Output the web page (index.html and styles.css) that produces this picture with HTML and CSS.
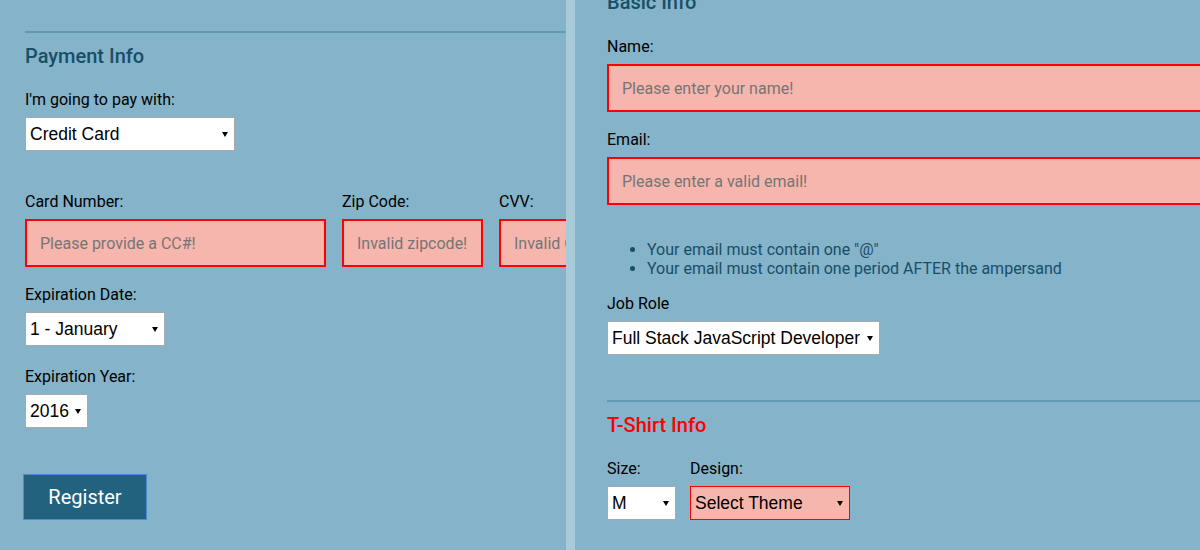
FILE: index.html
```html
<!DOCTYPE html>
<html lang="en">
<head>
<meta charset="utf-8">
<title>Registration</title>
<link rel="stylesheet" href="styles.css">
</head>
<body>
<div class="page">
  <section class="pane pane-left">
    <div class="rule"></div>
    <h2 class="legend">Payment Info</h2>
    <div class="field mt-22">
      <label class="label">I'm going to pay with:</label>
      <span class="select-wrap w-pay"><select class="select"><option>Credit Card</option></select></span>
    </div>
    <div class="row row-card mt-41">
      <div class="field w-cc">
        <label class="label">Card Number:</label>
        <input class="input" type="text" placeholder="Please provide a CC#!">
      </div>
      <div class="field w-zip">
        <label class="label">Zip Code:</label>
        <input class="input" type="text" placeholder="Invalid zipcode!">
      </div>
      <div class="field w-zip">
        <label class="label">CVV:</label>
        <input class="input" type="text" placeholder="Invalid CVV!">
      </div>
    </div>
    <div class="field mt-18">
      <label class="label">Expiration Date:</label>
      <span class="select-wrap w-month"><select class="select"><option>1 - January</option></select></span>
    </div>
    <div class="field mt-21">
      <label class="label">Expiration Year:</label>
      <span class="select-wrap w-year"><select class="select"><option>2016</option></select></span>
    </div>
    <button class="register" type="button">Register</button>
  </section>
  <div class="divider"></div>
  <section class="pane pane-right">
    <h2 class="legend legend-top">Basic Info</h2>
    <div class="field mt-23">
      <label class="label">Name:</label>
      <input class="input input-wide" type="text" placeholder="Please enter your name!">
    </div>
    <div class="field mt-18">
      <label class="label">Email:</label>
      <input class="input input-wide" type="text" placeholder="Please enter a valid email!">
    </div>
    <ul class="hints">
      <li>Your email must contain one "@"</li>
      <li>Your email must contain one period AFTER the ampersand</li>
    </ul>
    <div class="field mt-16">
      <label class="label">Job Role</label>
      <span class="select-wrap w-job"><select class="select"><option>Full Stack JavaScript Developer</option></select></span>
    </div>
    <div class="rule mt-45"></div>
    <h2 class="legend legend-error">T-Shirt Info</h2>
    <div class="row row-shirt mt-22">
      <div class="field">
        <label class="label">Size:</label>
        <span class="select-wrap w-size"><select class="select"><option>M</option></select></span>
      </div>
      <div class="field">
        <label class="label">Design:</label>
        <span class="select-wrap w-design select-error"><select class="select"><option>Select Theme</option></select></span>
      </div>
    </div>
  </section>
</div>
</body>
</html>
```
FILE: styles.css
```css
* { box-sizing: border-box; }

html, body {
  margin: 0;
  padding: 0;
  height: 550px;
  overflow: hidden;
  background: #84b3ca;
  font-family: Roboto, "Liberation Sans", Arial, sans-serif;
}

.page {
  display: flex;
  height: 550px;
}

.pane {
  overflow: hidden;
  height: 550px;
}

.pane-left {
  width: 566px;
  flex-shrink: 0;
  padding: 31px 0 0 25px;
}

.divider {
  width: 9px;
  flex-shrink: 0;
  background: #a9cbd9;
}

.pane-right {
  flex: 1;
  min-width: 0;
  padding: 0 0 0 32px;
}

.rule {
  height: 2px;
  background: #6499b3;
}

.legend {
  margin: 11px 0 0;
  font-size: 20px;
  line-height: 24px;
  font-weight: 500;
  color: #184f68;
}

.legend-top { margin-top: -10px; }
.legend-error { color: #ff0000; }

.field { display: block; }

.label {
  display: block;
  font-size: 16px;
  line-height: 20px;
  color: #000;
  margin-bottom: 7px;
  white-space: nowrap;
}

.mt-16 { margin-top: 16px; }
.mt-18 { margin-top: 18px; }
.mt-21 { margin-top: 21px; }
.mt-22 { margin-top: 22px; }
.mt-23 { margin-top: 23px; }
.mt-41 { margin-top: 41px; }
.mt-45 { margin-top: 45px; }

.row { display: flex; }
.row > .field { flex-shrink: 0; }
.row-card { gap: 16px; }
.row-shirt { gap: 14px; }

.w-cc { width: 301px; }
.w-zip { width: 141px; }

.input {
  display: block;
  width: 100%;
  height: 48px;
  margin: 0;
  padding: 0 13px;
  border: 2px solid #ff0000;
  border-radius: 0;
  background: #f6b6ae;
  font-family: Roboto, sans-serif;
  font-size: 16px;
  color: #333;
  outline: none;
}

.input::placeholder { color: #757575; opacity: 1; }

.input-wide { width: 720px; }

.select-wrap {
  position: relative;
  display: block;
  height: 34px;
  background: #fff;
  border: 1px solid #a9a9a9;
}

.select-wrap::after {
  content: "";
  position: absolute;
  right: 6px;
  top: 14px;
  width: 0;
  height: 0;
  border-left: 3px solid transparent;
  border-right: 3px solid transparent;
  border-top: 5px solid #000;
  pointer-events: none;
}

.select {
  -webkit-appearance: none;
  appearance: none;
  display: block;
  width: 100%;
  height: 32px;
  margin: 0;
  padding: 0 16px 0 4px;
  border: 0;
  border-radius: 0;
  background: transparent;
  font-family: "Liberation Sans", Arial, sans-serif;
  font-size: 17.5px;
  color: #000;
  outline: none;
}

.select-error {
  background: #f6b6ae;
  border-color: #ff0000;
}

.w-pay { width: 210px; }
.w-month { width: 140px; }
.w-year { width: 63px; }
.w-job { width: 273px; }
.w-size { width: 69px; }
.w-design { width: 160px; }

.register {
  display: block;
  width: 124px;
  height: 46px;
  margin: 46px 0 0 -2px;
  padding: 0;
  background: #22627e;
  border: 1px solid #4a8ad8;
  border-radius: 0;
  color: #fff;
  font-family: Roboto, sans-serif;
  font-size: 20px;
  cursor: pointer;
}

.hints {
  margin: 35px 0 0;
  padding-left: 40px;
  font-size: 16px;
  line-height: 19px;
  color: #184f68;
}
```
